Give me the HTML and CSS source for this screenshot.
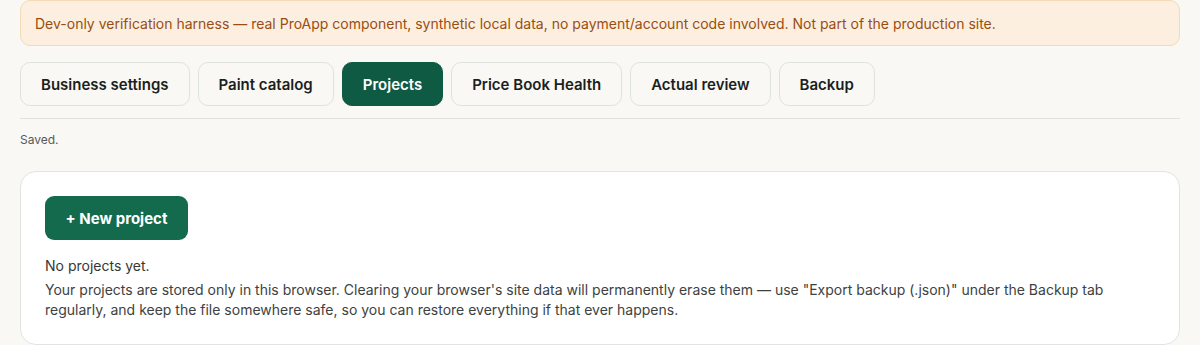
FILE: index.html
```html
<!DOCTYPE html>
<html lang="en">
<head>
<meta charset="utf-8">
<title>ProApp harness</title>
<link rel="stylesheet" href="styles.css">
</head>
<body>
<div class="page">
  <div class="banner">Dev-only verification harness — real ProApp component, synthetic local data, no payment/account code involved. Not part of the production site.</div>
  <nav class="tabs">
    <button class="tab">Business settings</button>
    <button class="tab">Paint catalog</button>
    <button class="tab active">Projects</button>
    <button class="tab">Price Book Health</button>
    <button class="tab">Actual review</button>
    <button class="tab">Backup</button>
  </nav>
  <div class="status">Saved.</div>
  <section class="card">
    <button class="primary">+ New project</button>
    <p class="empty">No projects yet.</p>
    <p class="note">Your projects are stored only in this browser. Clearing your browser's site data will permanently erase them — use "Export backup (.json)" under the Backup tab regularly, and keep the file somewhere safe, so you can restore everything if that ever happens.</p>
  </section>
</div>
</body>
</html>
```
FILE: styles.css
```css
* { box-sizing: border-box; }
html, body { margin: 0; padding: 0; }
body {
  background: #f9f8f4;
  font-family: Inter, "Noto Sans", sans-serif;
  color: #1f2421;
}
.page {
  padding: 0 20px;
}
.banner {
  height: 46px;
  display: flex;
  align-items: center;
  padding: 0 14px;
  background: #fcefdf;
  border: 1px solid #f3dbb8;
  border-radius: 10px;
  color: #9a4d12;
  font-size: 14px;
}
.tabs {
  display: flex;
  gap: 8px;
  margin-top: 16px;
  padding-bottom: 12px;
  border-bottom: 1px solid #dfe3df;
}
.tab {
  height: 44px;
  padding: 0 20px;
  border: 1px solid #dfe3df;
  border-radius: 10px;
  background: #f9f8f4;
  font-family: inherit;
  font-size: 15px;
  font-weight: 600;
  color: #1b1f1d;
}
.tab.active {
  background: #0f5a42;
  border-color: #0f5a42;
  color: #ffffff;
}
.status {
  margin-top: 13px;
  font-size: 12px;
  color: #555b57;
}
.card {
  margin-top: 24px;
  background: #ffffff;
  border: 1px solid #e1e4e1;
  border-radius: 16px;
  padding: 24px 24px 24px;
}
.primary {
  height: 44px;
  padding: 0 20.5px;
  border: none;
  border-radius: 9px;
  background: #146a4d;
  color: #ffffff;
  font-family: inherit;
  font-size: 15px;
  font-weight: 700;
}
.empty {
  margin: 16px 0 0;
  font-size: 14px;
  line-height: 20px;
  color: #333835;
}
.note {
  margin: 4px 0 0;
  font-size: 14px;
  line-height: 20px;
  color: #3d423f;
  max-width: 1100px;
}
```
